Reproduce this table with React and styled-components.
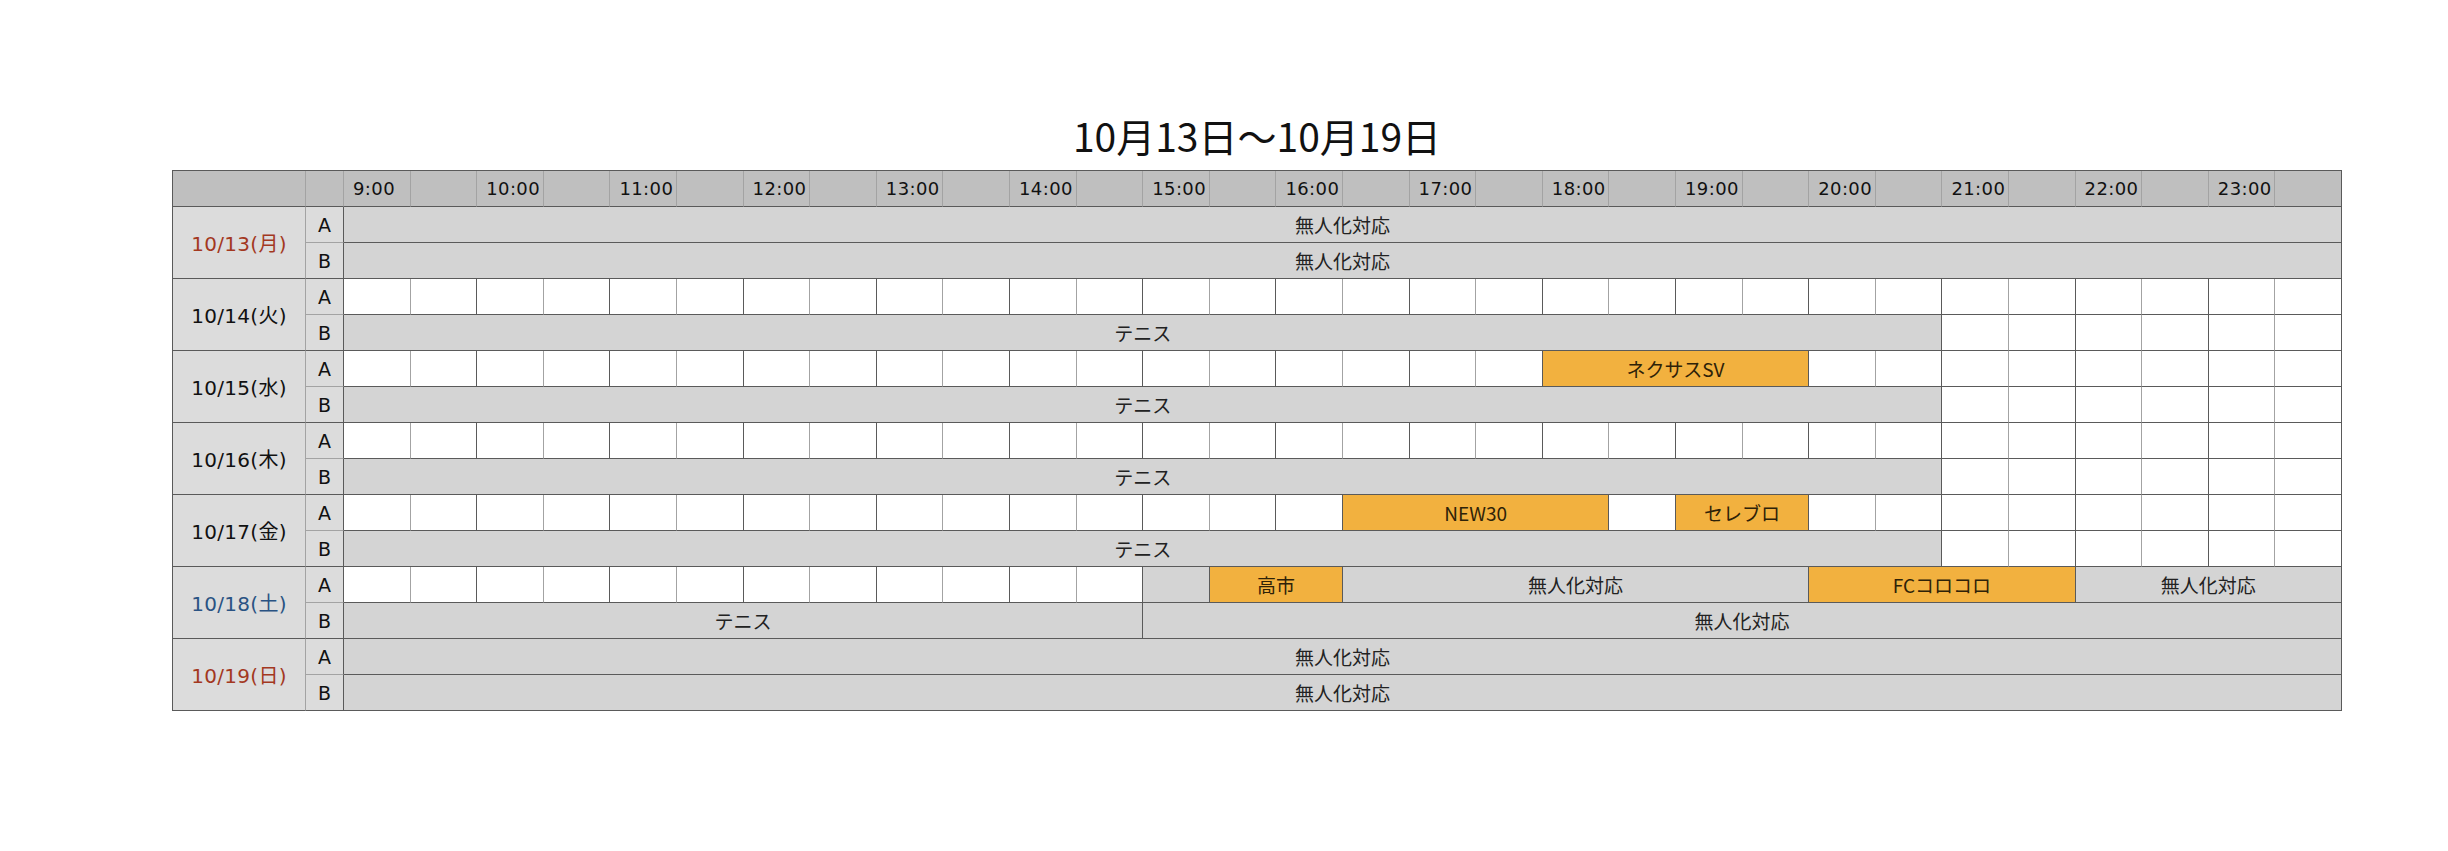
import styled, { createGlobalStyle } from 'styled-components'

const DARK = '#5a5a5a'
const LIGHT = '#a3a3a3'
const LATIN = '"DejaVu Sans", "Noto Sans CJK JP", sans-serif'

const GlobalStyle = createGlobalStyle`
    body {
        margin: 0;
        background: #fff;
        font-family: "Noto Sans CJK JP", "Noto Sans", sans-serif;
        color: #1a1a1a;
    }
`

const Page = styled.div`
    width: 2170px;
    padding: 111px 0 0 172px;
`

const Title = styled.h1`
    margin: 0 0 10px;
    text-align: center;
    font-size: 39px;
    font-weight: 400;
    line-height: 49px;
    color: #111;
`

const Grid = styled.div`
    display: grid;
    grid-template-columns: 133px 38px repeat(30, 1fr);
    grid-auto-rows: 36px;
    border-top: 1px solid ${DARK};
    border-left: 1px solid ${DARK};
    box-sizing: border-box;
    width: 2170px;
`

const HeadCell = styled.div`
    display: flex;
    align-items: center;
    box-sizing: border-box;
    background: #bfbfbf;
    border-right: 1px solid ${p => (p.$last ? DARK : LIGHT)};
    border-bottom: 1px solid ${DARK};
    font-family: ${LATIN};
    font-size: 18px;
    letter-spacing: 0.4px;
    padding-left: 9px;
    white-space: nowrap;
    color: #111;
`

const DateCell = styled.div`
    grid-row: span 2;
    display: flex;
    align-items: center;
    justify-content: center;
    box-sizing: border-box;
    background: #dcdcdc;
    border-right: 1px solid ${LIGHT};
    border-bottom: 1px solid ${DARK};
    font-family: ${LATIN};
    font-size: 20px;
    letter-spacing: 0.3px;
    color: ${p => p.$color};
`

const LaneCell = styled.div`
    display: flex;
    align-items: center;
    justify-content: center;
    box-sizing: border-box;
    background: #dcdcdc;
    border-right: 1px solid ${DARK};
    border-bottom: 1px solid ${p => (p.$lane === 'A' ? LIGHT : DARK)};
    font-family: ${LATIN};
    font-size: 19px;
    color: #111;
`

const fills = {
    white: '#fff',
    gray: '#d4d4d4',
    orange: '#f2b13f',
}

const Slot = styled.div`
    grid-column: span ${p => p.$span};
    display: flex;
    align-items: center;
    justify-content: center;
    box-sizing: border-box;
    background: ${p => fills[p.$kind]};
    border-right: 1px solid ${p => (p.$edge ? DARK : LIGHT)};
    border-bottom: 1px solid ${DARK};
    font-size: 19px;
    color: ${p => (p.$kind === 'orange' ? '#2e2208' : '#222')};
    white-space: nowrap;
`

const RED = '#a3381f'
const BLUE = '#2a5383'

const full = [{ s: 0, e: 30, t: '無人化対応', k: 'gray' }]
const tennis = [{ s: 0, e: 24, t: 'テニス', k: 'gray' }]

const days = [
    { date: '10/13(月)', color: RED, A: full, B: full },
    { date: '10/14(火)', color: '#111', A: [], B: tennis },
    { date: '10/15(水)', color: '#111', A: [{ s: 18, e: 22, t: 'ネクサスSV', k: 'orange' }], B: tennis },
    { date: '10/16(木)', color: '#111', A: [], B: tennis },
    {
        date: '10/17(金)',
        color: '#111',
        A: [
            { s: 15, e: 19, t: 'NEW30', k: 'orange' },
            { s: 20, e: 22, t: 'セレブロ', k: 'orange' },
        ],
        B: tennis,
    },
    {
        date: '10/18(土)',
        color: BLUE,
        A: [
            { s: 12, e: 13, t: '', k: 'gray' },
            { s: 13, e: 15, t: '高市', k: 'orange' },
            { s: 15, e: 22, t: '無人化対応', k: 'gray' },
            { s: 22, e: 26, t: 'FCコロコロ', k: 'orange' },
            { s: 26, e: 30, t: '無人化対応', k: 'gray' },
        ],
        B: [
            { s: 0, e: 12, t: 'テニス', k: 'gray' },
            { s: 12, e: 30, t: '無人化対応', k: 'gray' },
        ],
    },
    { date: '10/19(日)', color: RED, A: full, B: full },
]

// turn a lane's events into a full row of 30 half-hour cells
function buildLane(events) {
    const cells = []
    let i = 0
    while (i < 30) {
        const ev = events.find(e => e.s === i)
        if (ev) {
            cells.push({ span: ev.e - ev.s, kind: ev.k, text: ev.t, edge: true })
            i = ev.e
        } else {
            const next = events.some(e => e.s === i + 1)
            cells.push({ span: 1, kind: 'white', text: '', edge: (i + 1) % 2 === 0 || next })
            i += 1
        }
    }
    return cells
}

const hours = Array.from({ length: 30 }, (_, i) => (i % 2 === 0 ? `${9 + i / 2}:00` : ''))

function App() {
    return (
        <Page>
            <GlobalStyle />
            <Title>10月13日〜10月19日</Title>
            <Grid>
                <HeadCell />
                <HeadCell />
                {hours.map((h, i) => (
                    <HeadCell key={i} $last={i === 29}>{h}</HeadCell>
                ))}
                {days.map(day => (
                    <Day key={day.date} day={day} />
                ))}
            </Grid>
        </Page>
    )
}

function Day({ day }) {
    return (
        <>
            <DateCell $color={day.color}>{day.date}</DateCell>
            {['A', 'B'].map(lane => (
                <Lane key={lane} lane={lane} cells={buildLane(day[lane])} />
            ))}
        </>
    )
}

function Lane({ lane, cells }) {
    return (
        <>
            <LaneCell $lane={lane}>{lane}</LaneCell>
            {cells.map((c, i) => (
                <Slot key={i} $span={c.span} $kind={c.kind} $edge={c.edge}>
                    {c.text}
                </Slot>
            ))}
        </>
    )
}

export default App
